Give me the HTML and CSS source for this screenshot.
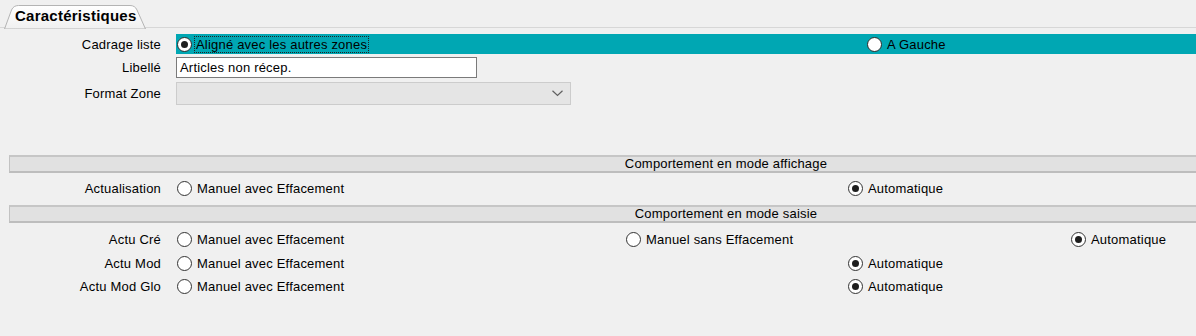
FILE: index.html
```html
<!DOCTYPE html>
<html lang="fr">
<head>
<meta charset="utf-8">
<title>Caractéristiques</title>
<link rel="stylesheet" href="styles.css">
</head>
<body>
<div class="tabbar">
  <div class="tab">
    <svg class="tab-shape" width="142" height="24" viewBox="0 0 142 24">
      <defs>
        <linearGradient id="tg" x1="0" y1="0" x2="0" y2="1">
          <stop offset="0" stop-color="#ffffff"/>
          <stop offset="1" stop-color="#f0f0f0"/>
        </linearGradient>
      </defs>
      <path d="M0.5,24 L7.5,5 Q9.5,0.5 14.5,0.5 L126,0.5 Q131,0.5 133,5 L141.5,24 Z" fill="url(#tg)" stroke="#b4b4b4" stroke-width="1"/>
    </svg>
    <span class="tab-label">Caractéristiques</span>
  </div>
</div>

<div class="form">
  <div class="row row-20">
    <div class="label">Cadrage liste</div>
    <div class="ctrl teal">
      <label class="opt w690"><span class="radio on light"></span><span class="focus">Aligné avec les autres zones</span></label>
      <label class="opt"><span class="radio light"></span>A Gauche</label>
    </div>
  </div>
  <div class="row row-25">
    <div class="label">Libellé</div>
    <div class="ctrl"><div class="input">Articles non récep.</div></div>
  </div>
  <div class="row row-27">
    <div class="label">Format Zone</div>
    <div class="ctrl">
      <div class="select">
        <svg class="chev" width="11" height="7" viewBox="0 0 11 7"><path d="M0.5,0.8 L5.5,5.5 L10.5,0.8" fill="none" stroke="#606060" stroke-width="1.2"/></svg>
      </div>
    </div>
  </div>

  <div class="section-head sh1">Comportement en mode affichage</div>
  <div class="row row-aff">
    <div class="label">Actualisation</div>
    <div class="ctrl pad1">
      <label class="opt w671"><span class="radio"></span>Manuel avec Effacement</label>
      <label class="opt"><span class="radio on"></span>Automatique</label>
    </div>
  </div>

  <div class="section-head">Comportement en mode saisie</div>
  <div class="saisie">
    <div class="row row-s">
      <div class="label">Actu Cré</div>
      <div class="ctrl pad1">
        <label class="opt w449"><span class="radio"></span>Manuel avec Effacement</label>
        <label class="opt w445"><span class="radio"></span>Manuel sans Effacement</label>
        <label class="opt"><span class="radio on"></span>Automatique</label>
      </div>
    </div>
    <div class="row row-s">
      <div class="label">Actu Mod</div>
      <div class="ctrl pad1">
        <label class="opt w671"><span class="radio"></span>Manuel avec Effacement</label>
        <label class="opt"><span class="radio on"></span>Automatique</label>
      </div>
    </div>
    <div class="row row-s">
      <div class="label">Actu Mod Glo</div>
      <div class="ctrl pad1">
        <label class="opt w671"><span class="radio"></span>Manuel avec Effacement</label>
        <label class="opt"><span class="radio on"></span>Automatique</label>
      </div>
    </div>
  </div>
</div>
</body>
</html>
```

FILE: styles.css
```css
html, body {
  margin: 0;
  padding: 0;
}
body {
  width: 1196px;
  height: 336px;
  overflow: hidden;
  background: #f0f0f0;
  font-family: "Liberation Sans", Arial, sans-serif;
  font-size: 13px;
  letter-spacing: 0.2px;
  color: #000;
}

/* tab strip */
.tabbar {
  height: 28px;
  display: flex;
  align-items: flex-end;
  box-shadow: inset 0 -1px 0 #d7d7d7;
  box-sizing: border-box;
}
.tab {
  position: relative;
  width: 142px;
  height: 24px;
  margin-left: 4px;
  margin-bottom: -1px;
  z-index: 1;
}
.tab-shape {
  position: absolute;
  left: 0;
  top: 0;
  display: block;
}
.tab-label {
  position: relative;
  display: block;
  padding-left: 11px;
  padding-top: 3px;
  font-weight: bold;
  font-size: 15px;
  letter-spacing: 0.25px;
  line-height: 16px;
}

/* form */
.form {
  padding-top: 6px;
}
.row {
  display: grid;
  grid-template-columns: 161px 1fr;
  column-gap: 15px;
  align-items: center;
}
.row-20 { height: 20px; }
.row-25 { height: 25px; margin-top: 1px; }
.row-27 { height: 27px; }
.row-aff { height: 32px; padding-bottom: 1px; box-sizing: border-box; }
.row-s { height: 23.5px; }
.saisie { padding-top: 5px; }

.label {
  text-align: right;
  white-space: nowrap;
}
.ctrl {
  display: flex;
  align-items: center;
  height: 100%;
  white-space: nowrap;
}
.pad1 { padding-left: 1px; }
.teal {
  background: #00a7b3;
  padding-left: 1px;
}

.opt {
  display: flex;
  align-items: center;
  gap: 5px;
  flex: none;
}
.w690 { width: 690px; }
.w671 { width: 671px; }
.w449 { width: 449px; }
.w445 { width: 445px; }

.radio {
  width: 15px;
  height: 15px;
  box-sizing: border-box;
  border: 1px solid #333;
  border-radius: 50%;
  background: #fff;
  display: flex;
  align-items: center;
  justify-content: center;
  flex: none;
}
.radio.light {
  border-color: #2a2a2a;
}
.radio.on::after {
  content: "";
  width: 7px;
  height: 7px;
  border-radius: 50%;
  background: #1e1e1e;
}
.focus {
  outline: 1px dotted #222;
  outline-offset: 0;
  padding: 0 1px;
  margin-left: -2px;
  line-height: 15px;
}

.input {
  width: 301px;
  height: 21px;
  box-sizing: border-box;
  border: 1px solid #7a7a7a;
  background: #fff;
  padding-left: 3px;
  line-height: 19px;
}
.select {
  width: 395px;
  height: 23px;
  box-sizing: border-box;
  border: 1px solid #cccccc;
  background: #e5e5e5;
  display: flex;
  align-items: center;
  justify-content: flex-end;
  padding-right: 7px;
}
.chev { display: block; }

.section-head {
  margin-left: 9px;
  height: 18px;
  box-sizing: border-box;
  background: #e1e1e1;
  border-left: 1px solid #c2c2c2;
  border-top: 2px solid #c6c6c6;
  border-bottom: 2px solid #bdbdbd;
  padding-left: 246px;
  text-align: center;
  line-height: 14px;
}
.sh1 { margin-top: 48px; }
```
